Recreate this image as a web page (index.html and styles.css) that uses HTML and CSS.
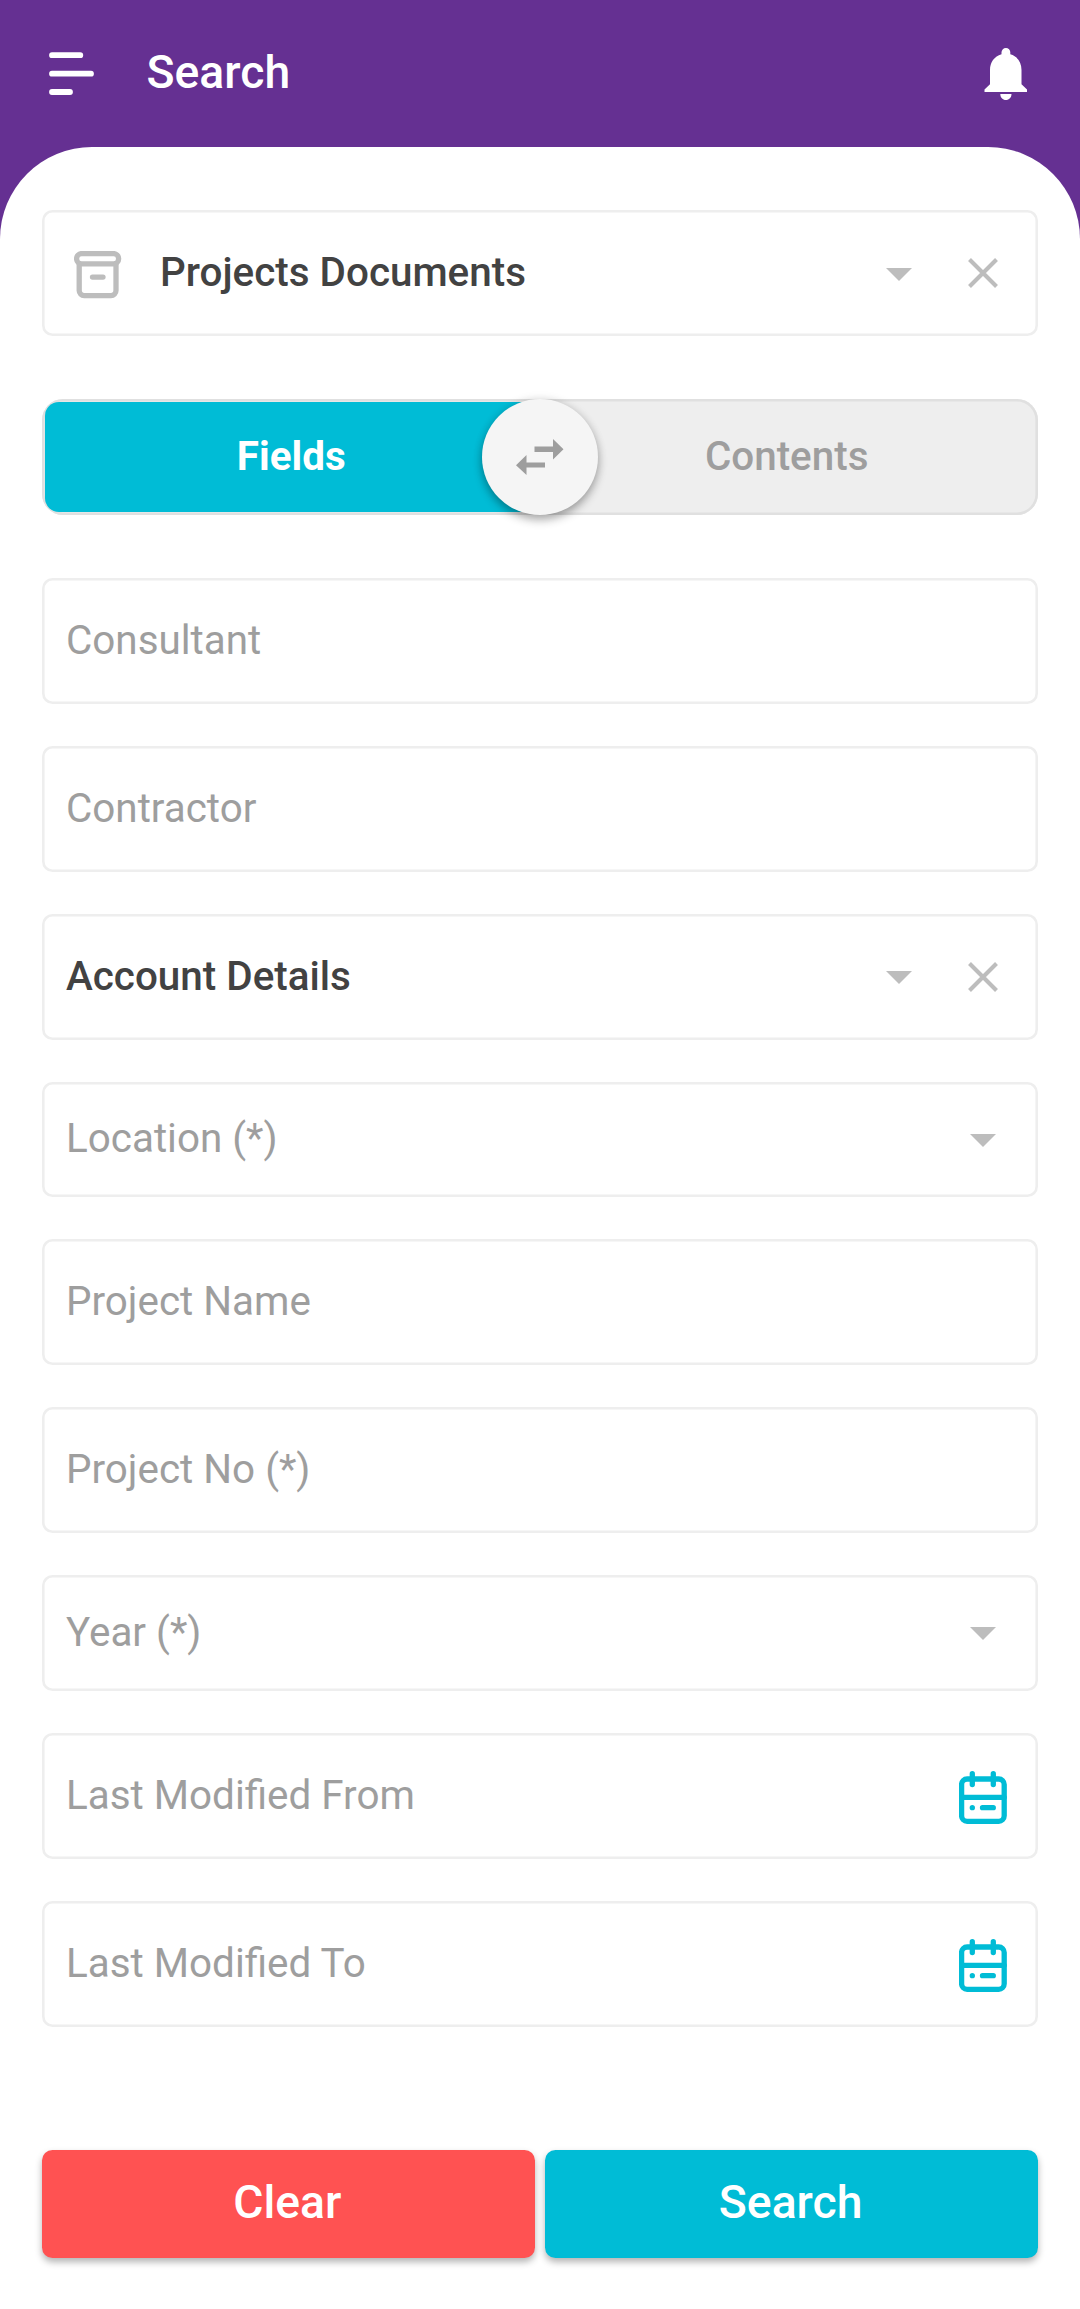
FILE: index.html
```html
<!DOCTYPE html>
<html lang="en">
<head>
<meta charset="utf-8">
<title>Search</title>
<link rel="stylesheet" href="styles.css">
</head>
<body>
<svg class="sprite" aria-hidden="true">
  <symbol id="caret" viewBox="0 0 26 13"><path d="M0 0h26L13 13z" fill="#bdbdbd"/></symbol>
  <symbol id="close" viewBox="0 0 30 30"><path d="M1.500 1.500l27 27M28.500 1.500l-27 27" fill="none" stroke="#bdbdbd" stroke-width="4.100"/></symbol>
  <symbol id="calendar" viewBox="0 0 48 54">
    <g fill="none" stroke="#00bcd6" stroke-width="5.300" stroke-linecap="round">
      <rect x="2.600" y="8" width="42.600" height="42.300" rx="5.500"/>
      <path d="M2.600 26.300h42.600M13.300 2.700v10.800M34.300 2.700v10.800M23.500 36.700h10.800"/>
      <path d="M13.300 36.700h.01"/>
    </g>
  </symbol>
</svg>
<header class="topbar">
  <svg class="menu" viewBox="0 0 46 44"><path d="M3 3.200h28.300M3 21.700h39M3 40h18" fill="none" stroke="#fff" stroke-width="5.800" stroke-linecap="round"/></svg>
  <h1 class="title">Search</h1>
  <svg class="bell" viewBox="0 0 44 52"><path d="M22 0a4.300 4.300 0 0 1 4.300 4.300v1.900C33.500 8.200 37.500 14.500 37.500 22v14.200l5.500 5.300V44H.5v-2.500L6 36.200V22C6 14.500 10.200 8.200 17.500 6.200V4.300A4.400 4.400 0 0 1 22 0zM16.300 46h11.200c0 3.600-2.400 6-5.600 6s-5.600-2.400-5.600-6z" fill="#fff"/></svg>
</header>
<main class="sheet">
  <div class="field source">
    <svg class="archive" viewBox="0 0 48 48"><g fill="none" stroke="#bdbdbd" stroke-width="5.300" stroke-linecap="round"><rect x="2.600" y="2.600" width="42" height="10.300" rx="5"/><path d="M5.200 13v26.600a5 5 0 0 0 5 5h26.800a5 5 0 0 0 5-5V13M18.500 26.100h10.500"/></g></svg>
    <span class="label value">Projects Documents</span>
    <svg class="caret"><use href="#caret"/></svg>
    <svg class="close"><use href="#close"/></svg>
  </div>
  <div class="toggle">
    <div class="option active">Fields</div>
    <div class="option">Contents</div>
    <div class="knob"><svg class="swap" viewBox="0 0 48 36"><path d="M18.500 7.500H37V0l10.500 10.200L37 20.500V13H18.500zM29 23.500H10.500V16L0 26.200 10.500 36v-7.500H29z" fill="#9e9e9e"/></svg></div>
  </div>
  <form class="fields">
    <div class="field"><span class="label">Consultant</span></div>
    <div class="field"><span class="label">Contractor</span></div>
    <div class="field"><span class="label value">Account Details</span><svg class="caret"><use href="#caret"/></svg><svg class="close"><use href="#close"/></svg></div>
    <div class="field short"><span class="label">Location (*)</span><svg class="caret last"><use href="#caret"/></svg></div>
    <div class="field"><span class="label">Project Name</span></div>
    <div class="field"><span class="label">Project No (*)</span></div>
    <div class="field short"><span class="label">Year (*)</span><svg class="caret last"><use href="#caret"/></svg></div>
    <div class="field"><span class="label">Last Modified From</span><svg class="calendar"><use href="#calendar"/></svg></div>
    <div class="field"><span class="label">Last Modified To</span><svg class="calendar"><use href="#calendar"/></svg></div>
  </form>
  <div class="actions">
    <button class="btn clear" type="button">Clear</button>
    <button class="btn search" type="button">Search</button>
  </div>
</main>
</body>
</html>
```

FILE: styles.css
```css
* { box-sizing: border-box; }

body {
  margin: 0;
  height: 2309px;
  background: #653092;
  font-family: Roboto, "Liberation Sans", sans-serif;
  display: flex;
  flex-direction: column;
  overflow: hidden;
}

.sprite { display: none; }

svg { flex: none; display: block; }

.topbar {
  height: 147px;
  flex: none;
  padding: 0 52px 0 49px;
  display: flex;
  align-items: center;
}

.menu { width: 46px; height: 44px; }

.title {
  margin: 0 0 3px 51.5px;
  flex: 1;
  color: #fff;
  font-size: 46.3px;
  font-weight: 500;
  line-height: 54px;
}

.bell { width: 44px; height: 52px; }

.sheet {
  flex: 1;
  padding: 63px 42px 0;
  background: #fff;
  border-radius: 92px 92px 0 0;
}

.field {
  height: 126px;
  padding: 0 40px 0 24px;
  display: flex;
  align-items: center;
  border-radius: 10.5px;
  box-shadow: inset 0 0 0 2.6px #eee;
}

.short { height: 115.5px; }

.label {
  flex: 1;
  color: #9e9e9e;
  font-size: 40.4px;
  line-height: 48px;
}

.value { color: #424242; font-weight: 500; }

.caret { width: 26px; height: 13px; margin: 2px 56px 0 0; }

.caret.last { margin-right: 2px; }

.close { width: 30px; height: 30px; }

.calendar { width: 48px; height: 54px; margin: 5px -9px 0 0; }

.source { padding-left: 32px; }

.archive { width: 48px; height: 48px; margin: 3px 38px 0 0; }

.toggle {
  position: relative;
  height: 115.5px;
  margin: 63px 0;
  padding: 2.6px;
  display: flex;
  background: #eee;
  border-radius: 21px;
  box-shadow: inset 0 0 0 2.6px #e0e0e0;
}

.option {
  flex: 1;
  display: flex;
  align-items: center;
  justify-content: center;
  padding: 0 2px 0 0;
  color: #9e9e9e;
  font-size: 40.4px;
  font-weight: 500;
}

.active {
  color: #fff;
  font-weight: 700;
  background: #00bcd6;
  border-radius: 14px 0 0 14px;
}

.knob {
  position: absolute;
  top: 0;
  left: calc(50% - 58px);
  width: 116px;
  height: 116px;
  display: flex;
  align-items: center;
  justify-content: center;
  border-radius: 50%;
  background: #f5f5f5;
  box-shadow: 0 5px 10px rgba(0, 0, 0, .3), 0 0 10px rgba(0, 0, 0, .1);
}

.swap { width: 48px; height: 36px; }

.fields {
  display: flex;
  flex-direction: column;
  gap: 42px;
}

.actions {
  display: grid;
  grid-template-columns: 1fr 1fr;
  gap: 10.5px;
  margin-top: 123px;
}

.btn {
  height: 108px;
  padding: 0 2px 4px 0;
  border: 0;
  border-radius: 10.5px;
  color: #fff;
  font: 500 46.3px Roboto, "Liberation Sans", sans-serif;
  box-shadow: 0 4px 7px rgba(0, 0, 0, .3);
}

.clear { background: #ff5252; }

.search { background: #00bcd6; }
```
